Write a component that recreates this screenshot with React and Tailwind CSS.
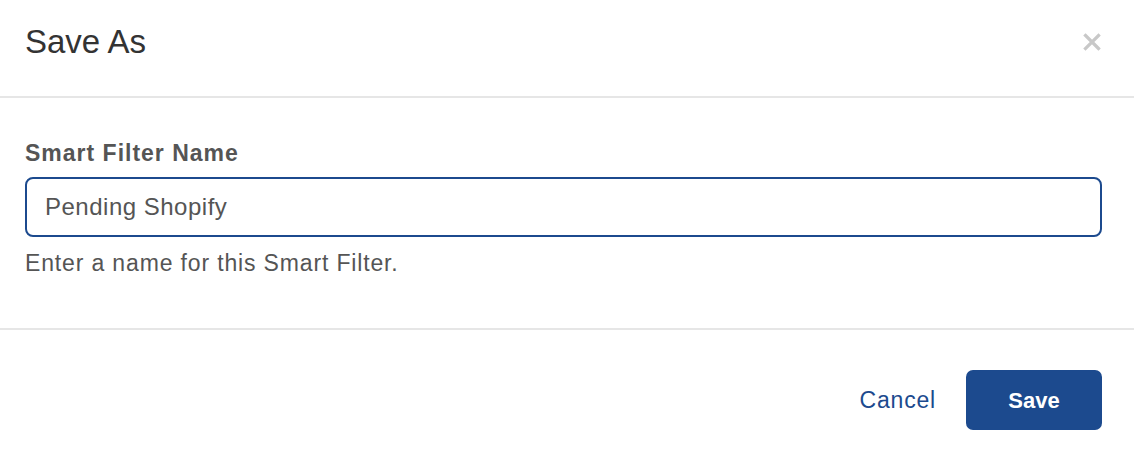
import React from 'react';

const App = () => {
    return (
        <div className="w-[1134px] h-[454px] bg-white flex flex-col font-['Liberation_Sans',Arial,sans-serif]">
            <div className="h-[98px] px-[25px] pb-[14px] flex items-center justify-between border-b-2 border-[#e6e6e6] shrink-0">
                <h2 className="text-[33px] leading-none text-[#333333]">Save As</h2>
                <button className="w-[20px] h-[20px] flex items-center justify-center mr-[7px] mt-[2px]" aria-label="Close">
                    <svg width="18" height="18" viewBox="0 0 18 18">
                        <path d="M2.5 2.5 L15.5 15.5 M15.5 2.5 L2.5 15.5" stroke="#c8c8c8" strokeWidth="3.2" strokeLinecap="square" />
                    </svg>
                </button>
            </div>

            <div className="px-[25px] pr-[32px] pt-[42px] h-[232px] border-b-2 border-[#e6e6e6] shrink-0">
                <label className="block text-[23px] leading-[26px] font-bold text-[#555555] tracking-[1px]">
                    Smart Filter Name
                </label>
                <div className="mt-[11px] h-[60px] border-2 border-[#1c4a8e] rounded-[8px] flex items-center px-[18px]">
                    <span className="text-[24px] text-[#555555] tracking-[0.5px]">Pending Shopify</span>
                </div>
                <p className="mt-[13px] text-[23px] leading-[26px] text-[#555555] tracking-[0.85px]">
                    Enter a name for this Smart Filter.
                </p>
            </div>

            <div className="flex-1 flex items-start justify-end pt-[40px] pr-[32px] gap-[30px]">
                <button className="h-[60px] text-[23px] text-[#1c4a8e] tracking-[0.8px] flex items-center">Cancel</button>
                <button className="h-[60px] w-[136px] bg-[#1c4a8e] rounded-[7px] text-white text-[22px] font-bold flex items-center justify-center">
                    Save
                </button>
            </div>
        </div>
    );
};

export default App;
